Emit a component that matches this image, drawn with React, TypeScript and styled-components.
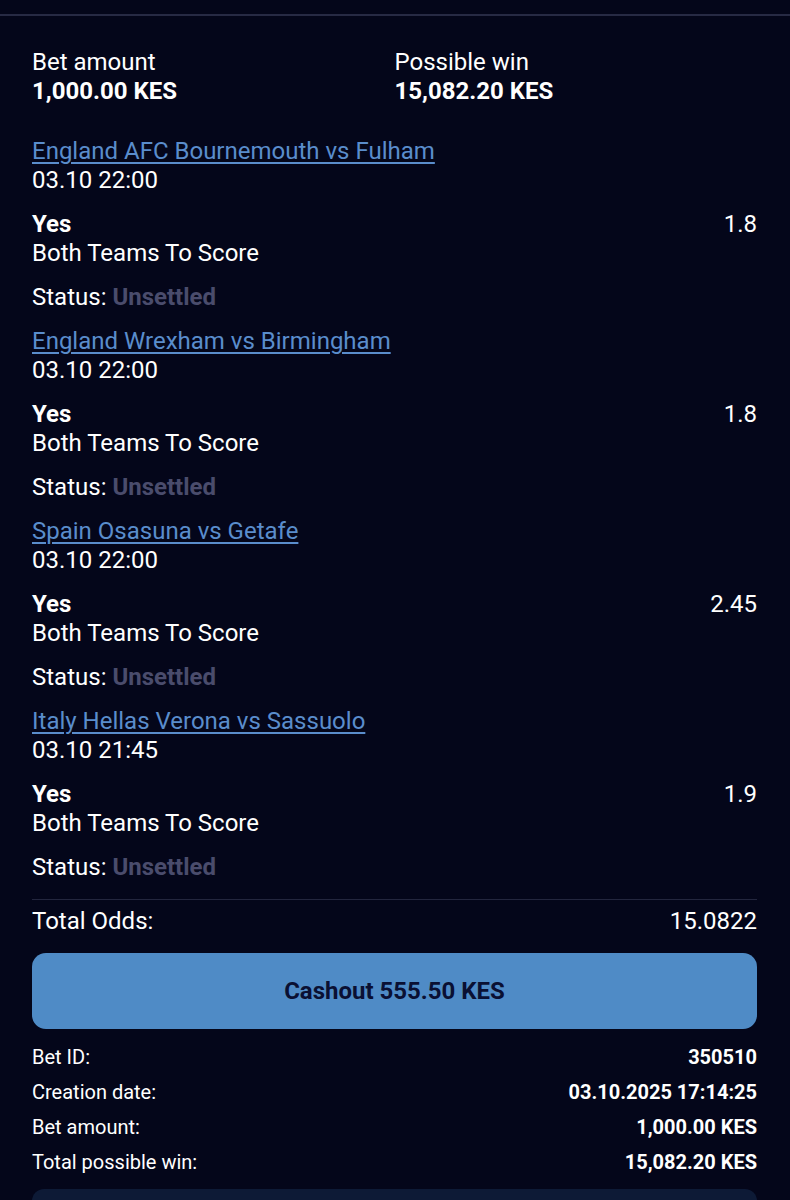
import styled, { createGlobalStyle } from "styled-components";

const GlobalStyle = createGlobalStyle`
  body {
    margin: 0;
    background: #04061a;
    font-family: Roboto, "Liberation Sans", sans-serif;
    color: #ffffff;
  }
`;

const Page = styled.div`
  min-height: 1200px;
  background: #04061a;
  overflow: hidden;
`;

const TopRule = styled.div`
  height: 14px;
  border-bottom: 2px solid #272a44;
`;

const Card = styled.div`
  padding: 32px 33px 0 32px;
  font-size: 24px;
  line-height: 29px;
`;

const Summary = styled.div`
  display: grid;
  grid-template-columns: 1fr 1fr;
  margin-bottom: 31px;
`;

const Label = styled.div``;

const Strong = styled.div`
  font-weight: 700;
`;

const Event = styled.div`
  margin-bottom: 15px;
`;

const Block = styled.div`
  margin-bottom: 15px;
`;

const MatchLink = styled.a`
  color: #5a8dcc;
  text-decoration: underline;
  text-underline-offset: 3px;
  text-decoration-thickness: 1.5px;
`;

const Row = styled.div`
  display: flex;
  justify-content: space-between;
  align-items: baseline;
`;

const StatusValue = styled.span`
  color: #4a4c6c;
  font-weight: 700;
`;

const Divider = styled.div`
  border-top: 1.5px solid #23263e;
  margin-top: 17px;
  padding-top: 7px;
`;

const CashoutButton = styled.button`
  display: block;
  width: 100%;
  height: 76px;
  margin: 17px 0 17px;
  border: none;
  border-radius: 14px;
  background: #4f8bc6;
  color: #0a1033;
  font-family: Roboto, "Liberation Sans", sans-serif;
  font-size: 24px;
  font-weight: 700;
`;

const Details = styled.div`
  display: flex;
  flex-direction: column;
  gap: 12px;
  font-size: 20px;
  line-height: 23px;
`;

const DetailValue = styled.span`
  font-weight: 700;
`;

const NextButton = styled.div`
  margin-top: 15px;
  height: 60px;
  border-radius: 12px;
  background: #0d1a36;
`;

type Selection = {
  match: string;
  time: string;
  pick: string;
  market: string;
  odds: string;
};

const selections: Selection[] = [
  { match: "England AFC Bournemouth vs Fulham", time: "03.10 22:00", pick: "Yes", market: "Both Teams To Score", odds: "1.8" },
  { match: "England Wrexham vs Birmingham", time: "03.10 22:00", pick: "Yes", market: "Both Teams To Score", odds: "1.8" },
  { match: "Spain Osasuna vs Getafe", time: "03.10 22:00", pick: "Yes", market: "Both Teams To Score", odds: "2.45" },
  { match: "Italy Hellas Verona vs Sassuolo", time: "03.10 21:45", pick: "Yes", market: "Both Teams To Score", odds: "1.9" },
];

const details = [
  ["Bet ID:", "350510"],
  ["Creation date:", "03.10.2025 17:14:25"],
  ["Bet amount:", "1,000.00 KES"],
  ["Total possible win:", "15,082.20 KES"],
];

export default function App() {
  return (
    <Page>
      <GlobalStyle />
      <TopRule />
      <Card>
        <Summary>
          <div>
            <Label>Bet amount</Label>
            <Strong>1,000.00 KES</Strong>
          </div>
          <div>
            <Label>Possible win</Label>
            <Strong>15,082.20 KES</Strong>
          </div>
        </Summary>

        {selections.map((s, i) => (
          <Event key={i}>
            <Block>
              <MatchLink>{s.match}</MatchLink>
              <div>{s.time}</div>
            </Block>
            <Block>
              <Row>
                <Strong>{s.pick}</Strong>
                <span>{s.odds}</span>
              </Row>
              <div>{s.market}</div>
            </Block>
            <div>
              Status: <StatusValue>Unsettled</StatusValue>
            </div>
          </Event>
        ))}

        <Divider>
          <Row>
            <span>Total Odds:</span>
            <span>15.0822</span>
          </Row>
        </Divider>

        <CashoutButton>Cashout 555.50 KES</CashoutButton>

        <Details>
          {details.map(([k, v]) => (
            <Row key={k}>
              <span>{k}</span>
              <DetailValue>{v}</DetailValue>
            </Row>
          ))}
        </Details>

        <NextButton />
      </Card>
    </Page>
  );
}
